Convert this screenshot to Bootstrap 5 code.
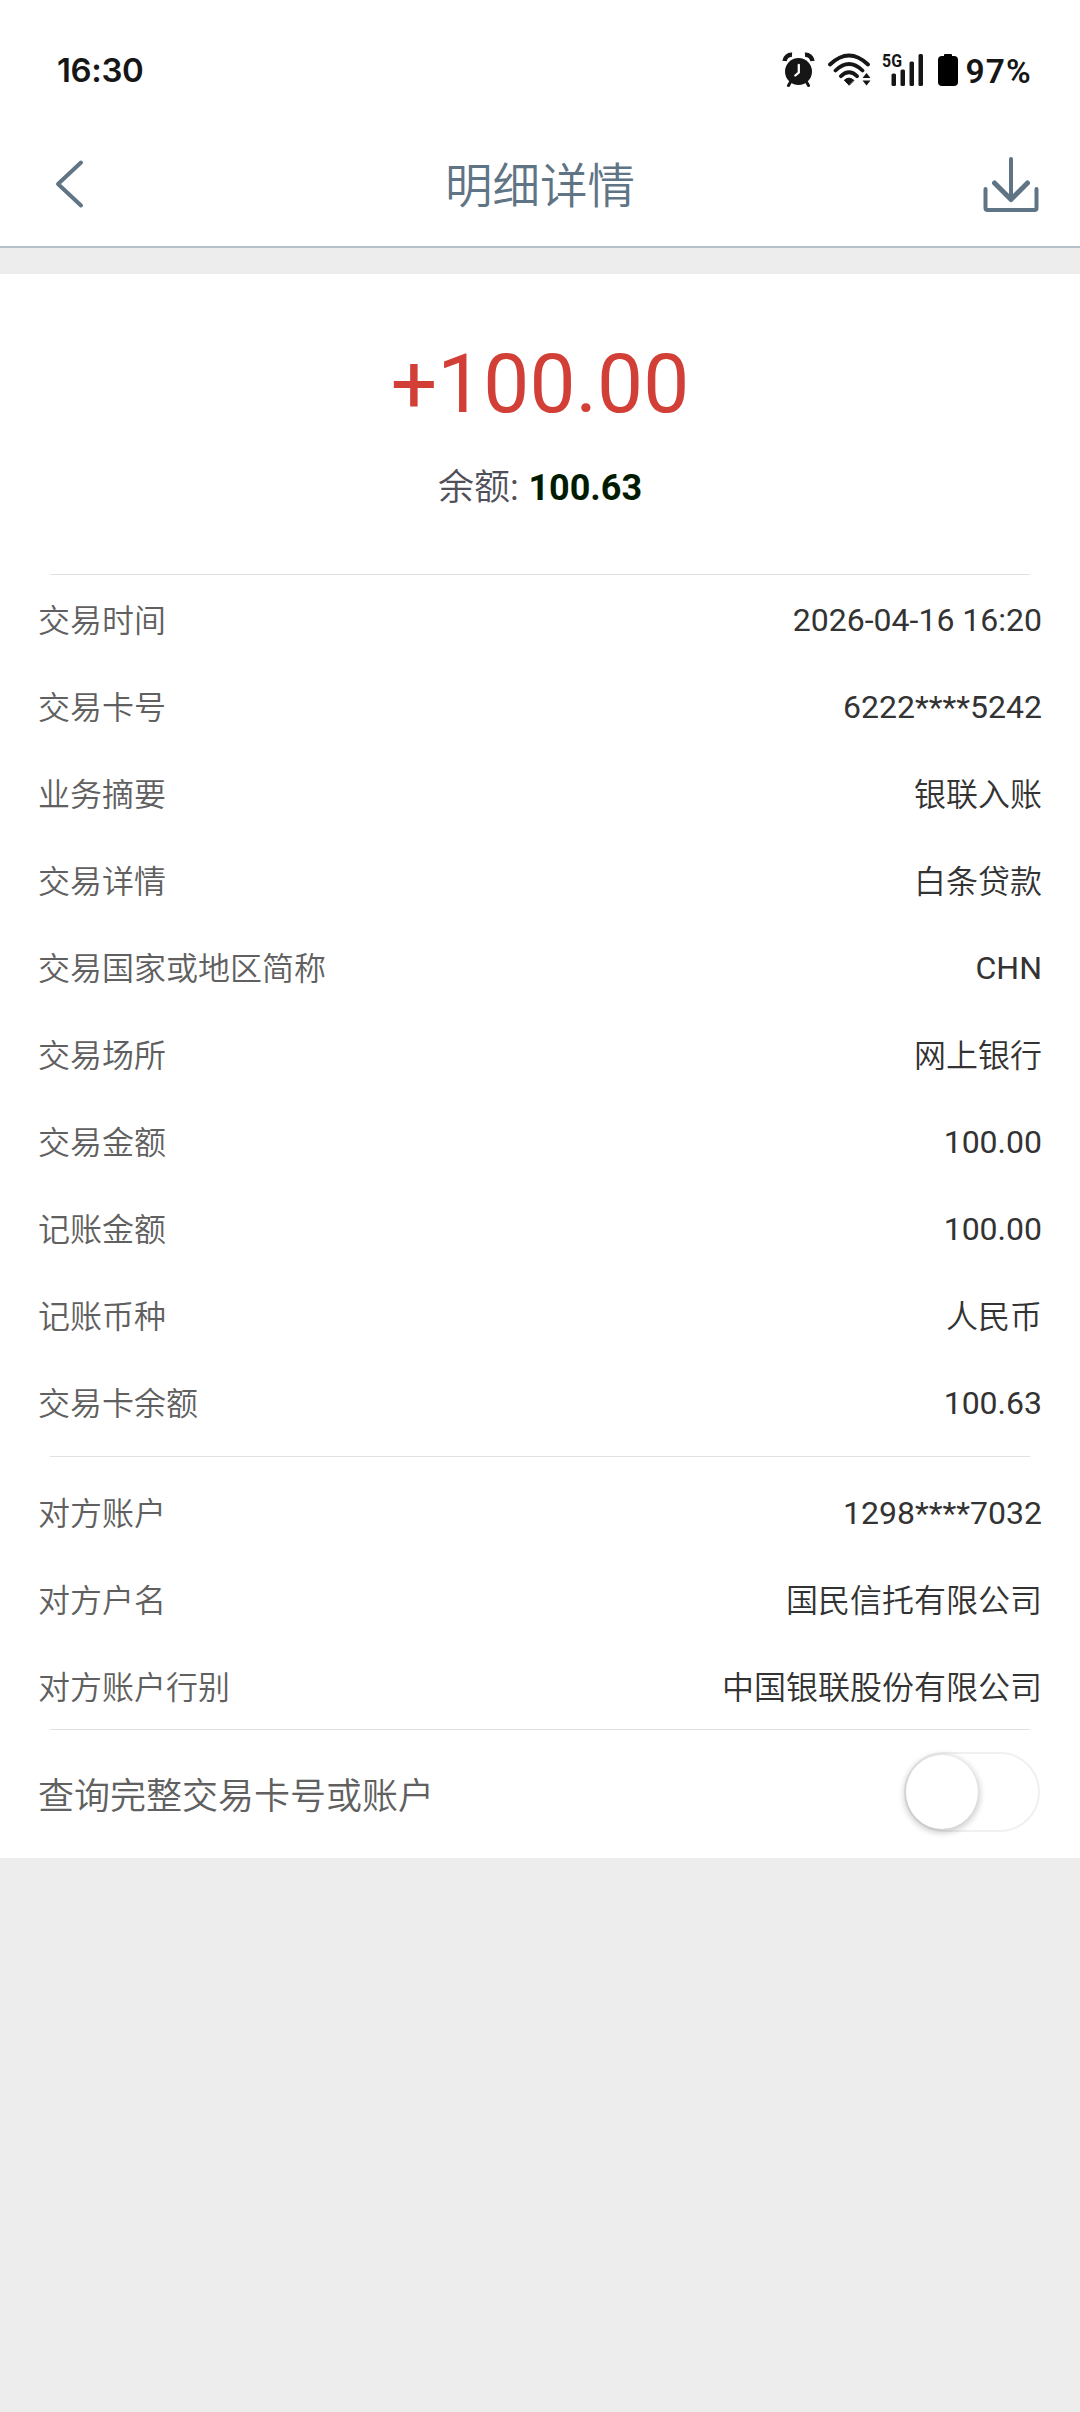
<!DOCTYPE html>
<html lang="zh-CN">
<head>
<meta charset="utf-8">
<meta name="viewport" content="width=device-width, initial-scale=1">
<title>明细详情</title>
<link href="https://cdn.jsdelivr.net/npm/bootstrap@5.3.0/dist/css/bootstrap.min.css" rel="stylesheet">
<style>
body{background:#ededed;font-family:Roboto,"Noto Sans CJK SC",sans-serif;font-size:32px;color:#333;min-height:2412px}
.status-bar{height:120px;padding:20px 48px 0 57px;font-family:Inter,sans-serif;font-weight:600;color:#161616}
.status-bar svg{display:block;flex:none}
.status-time{font-size:33px;line-height:40px;padding-top:30px;letter-spacing:-.4px}
.status-icons{padding-top:31px;height:80px}
.status-pct{font-family:Roboto,sans-serif;font-size:33.5px;line-height:40px;margin:1px 0 0 7px;letter-spacing:1.2px}
.wifi{margin-left:10px}
.battery{margin-left:10px}
.title-bar{height:128px;border-bottom:2px solid #b4c0ca;padding:0 38px 0 53px;color:#5f7485}
.title-bar h1{font-size:47.5px;line-height:60px;font-weight:350;color:#5f7485;padding:7px 15px 0 0}
.detail{margin-top:26px;height:1584px}
.summary{height:300px;padding-top:62px}
.amount{font-size:82px;line-height:96px;color:#d13f37}
.balance{font-size:36px;line-height:48px;margin-top:32px;color:#50505a;font-weight:350}
.balance b{color:#001b00;font-weight:700}
.balance i{font-style:normal;font-weight:400;margin-right:1px}
.rule{height:1px;background:#e2e2e2;margin:0 50px}
.rule-first{margin-bottom:2px}
.rule-mid{margin-top:9px;margin-bottom:13px}
.rule-last{margin-top:-2px}
.item{height:87px;padding:0 38px;line-height:40px;font-weight:350}
.item dt{font-weight:350;color:#606060}
.item dd{font-weight:350}
.item dd.num{font-weight:400;padding-bottom:2px}
.toggle-row{height:128px;padding:0 38px;font-size:36px;color:#606060;font-weight:350}
.toggle-row span{padding-top:5px}
.toggle{width:136px;height:80px;border:2px solid #f0f0f0;border-radius:40px;padding:1px 0;margin-right:2px}
.knob{width:72px;height:74px;border-radius:50%;background:#fff;box-shadow:0 2px 6px 2px rgba(0,0,0,.2)}
</style>
</head>
<body>
<div class="status-bar bg-white d-flex justify-content-between">
  <div class="status-time">16:30</div>
  <div class="status-icons d-flex align-items-start">
    <svg width="34" height="36" viewBox="0 0 34 36" fill="none" stroke="#161616">
      <circle cx="16.500" cy="20.500" r="13.500" fill="#161616" stroke="none"/>
      <path d="M2.500 10 A7 7 0 0 1 10 3.800 M30.500 10 A7 7 0 0 0 23 3.800" stroke-width="4.500"/>
      <path d="M8.500 31l-2 3.500M24.500 31l2 3.500" stroke-width="3" stroke-linecap="round"/>
      <path d="M16.800 14v7.500l-3.500 3" stroke="#fff" stroke-width="2.300" stroke-linecap="round"/>
    </svg>
    <svg class="wifi" width="48" height="36" viewBox="0 0 48 36" fill="none" stroke="#161616" stroke-width="3.800" stroke-linecap="round">
      <path d="M4 13.500Q23 -4.500 42 13.500M9.500 19.500Q23 6.500 36.500 19.500M15 25.200Q23 17.500 31 25.200"/>
      <path d="M23 34l-4.700-4.800Q23 25 27.700 29.200z" fill="#161616" stroke-width="1"/>
      <path d="M40.500 22l4 5h-8zM40.500 34.500l4-5h-8z" fill="#161616" stroke="none"/>
    </svg>
    <svg class="ms-2" width="46" height="36" viewBox="0 0 46 36" fill="#161616">
      <text x="0" y="16" font-family="Roboto" font-weight="700" font-size="18.500" textLength="20" lengthAdjust="spacingAndGlyphs">5G</text>
      <rect x="9.500" y="22.500" width="4.500" height="12.500" rx="1.500"/><rect x="18.500" y="18.500" width="4.500" height="16.500" rx="1.500"/><rect x="27.500" y="10.500" width="4.500" height="24.500" rx="1.500"/><rect x="36.500" y="3" width="4.500" height="32" rx="1.500"/>
    </svg>
    <svg class="battery" width="20" height="36" viewBox="0 0 20 36"><path d="M6 5V4q0-1 1-1h6q1 0 1 1v1h2q4 0 4 4v22q0 4-4 4H4q-4 0-4-4V9q0-4 4-4z" fill="#000"/></svg>
    <span class="status-pct">97%</span>
  </div>
</div>
<header class="title-bar bg-white d-flex align-items-center justify-content-between">
  <svg width="60" height="60" viewBox="0 0 60 60" fill="none" stroke="#5f7485" stroke-width="4" stroke-linecap="round" stroke-linejoin="round"><path d="M28 9.500L5 31l23 21.500"/></svg>
  <h1 class="m-0">明细详情</h1>
  <svg width="60" height="60" viewBox="0 0 60 60" fill="none" stroke="#5f7485" stroke-width="4" stroke-linecap="round" stroke-linejoin="round"><path d="M29 6v40"/><path d="M12.500 30L29 46.500l16.500-16.500" stroke-width="5"/><path d="M3.500 36v19q0 2 2 2h47q2 0 2-2v-19"/></svg>
</header>
<main class="detail bg-white">
  <section class="summary text-center">
    <div class="amount">+100.00</div>
    <div class="balance">余额<i>:</i> <b>100.63</b></div>
  </section>
  <div class="rule rule-first"></div>
  <dl class="m-0">
    <div class="item d-flex align-items-center justify-content-between"><dt>交易时间</dt><dd class="m-0 num">2026-04-16 16:20</dd></div>
    <div class="item d-flex align-items-center justify-content-between"><dt>交易卡号</dt><dd class="m-0 num">6222****5242</dd></div>
    <div class="item d-flex align-items-center justify-content-between"><dt>业务摘要</dt><dd class="m-0">银联入账</dd></div>
    <div class="item d-flex align-items-center justify-content-between"><dt>交易详情</dt><dd class="m-0">白条贷款</dd></div>
    <div class="item d-flex align-items-center justify-content-between"><dt>交易国家或地区简称</dt><dd class="m-0 num">CHN</dd></div>
    <div class="item d-flex align-items-center justify-content-between"><dt>交易场所</dt><dd class="m-0">网上银行</dd></div>
    <div class="item d-flex align-items-center justify-content-between"><dt>交易金额</dt><dd class="m-0 num">100.00</dd></div>
    <div class="item d-flex align-items-center justify-content-between"><dt>记账金额</dt><dd class="m-0 num">100.00</dd></div>
    <div class="item d-flex align-items-center justify-content-between"><dt>记账币种</dt><dd class="m-0">人民币</dd></div>
    <div class="item d-flex align-items-center justify-content-between"><dt>交易卡余额</dt><dd class="m-0 num">100.63</dd></div>
  </dl>
  <div class="rule rule-mid"></div>
  <dl class="m-0">
    <div class="item d-flex align-items-center justify-content-between"><dt>对方账户</dt><dd class="m-0 num">1298****7032</dd></div>
    <div class="item d-flex align-items-center justify-content-between"><dt>对方户名</dt><dd class="m-0">国民信托有限公司</dd></div>
    <div class="item d-flex align-items-center justify-content-between"><dt>对方账户行别</dt><dd class="m-0">中国银联股份有限公司</dd></div>
  </dl>
  <div class="rule rule-last"></div>
  <div class="toggle-row d-flex align-items-center justify-content-between">
    <span>查询完整交易卡号或账户</span>
    <div class="toggle mb-1" role="switch" aria-checked="false"><div class="knob"></div></div>
  </div>
</main>
<script src="https://cdn.jsdelivr.net/npm/bootstrap@5.3.0/dist/js/bootstrap.bundle.min.js"></script>
</body>
</html>
